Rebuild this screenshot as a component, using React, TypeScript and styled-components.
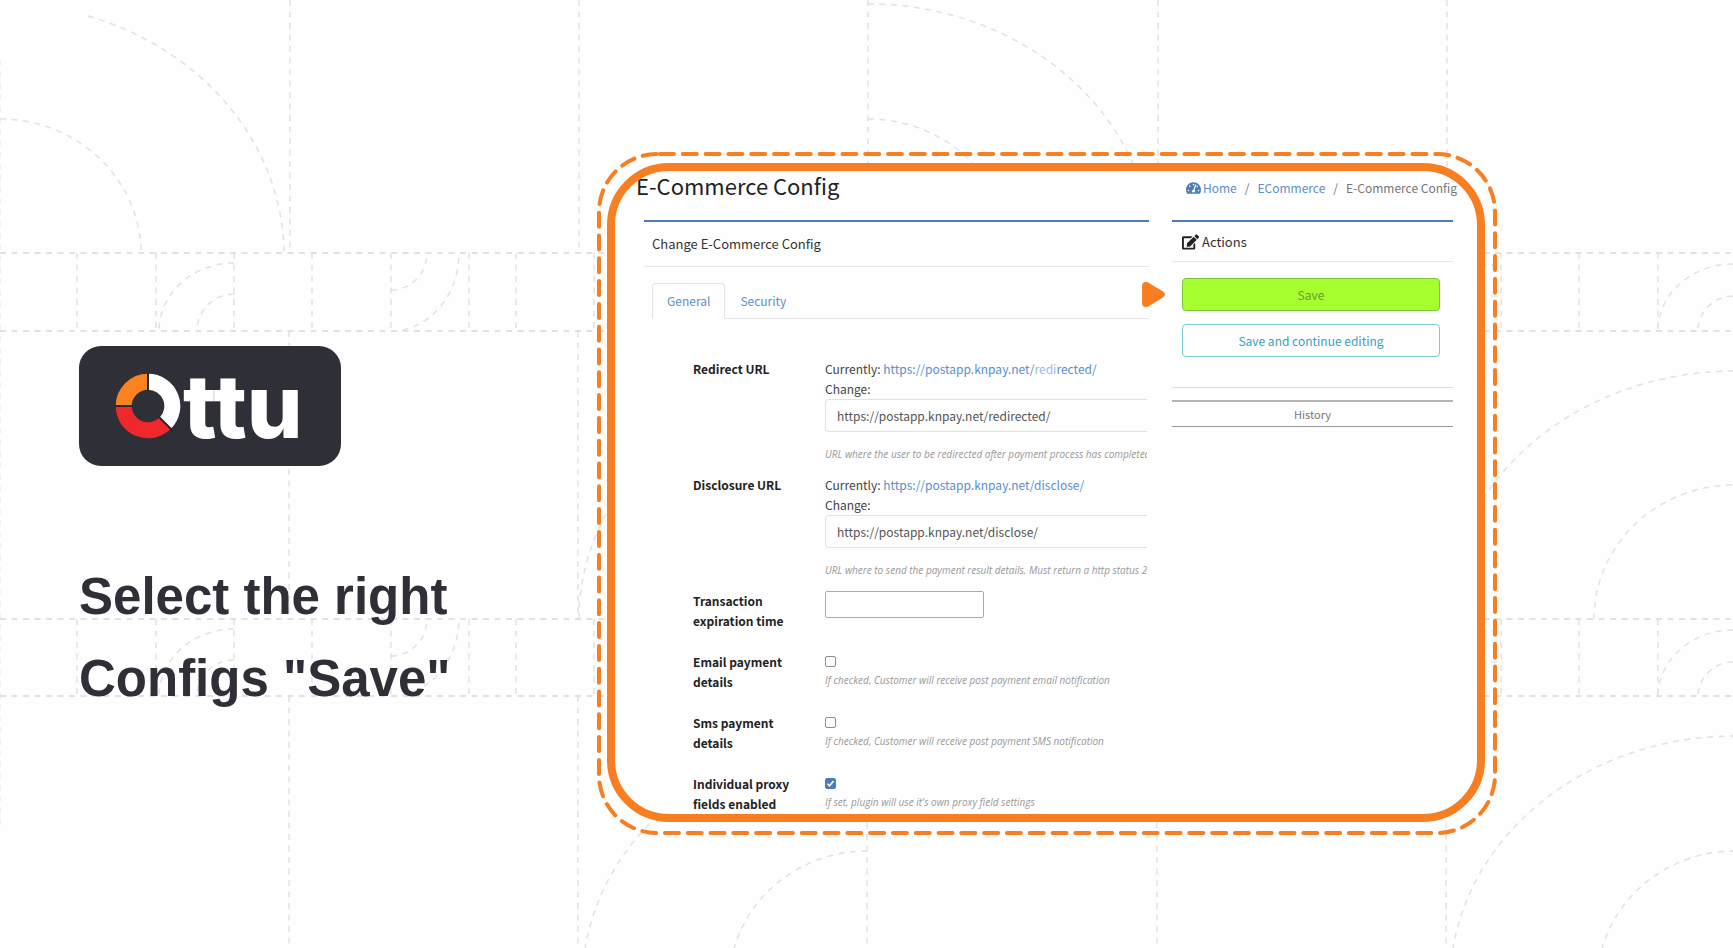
import React from "react";
import styled, { createGlobalStyle } from "styled-components";
import { FaEdit, FaTachometerAlt } from "react-icons/fa";

const ORANGE = "#f77e21";
const INK = "#2f2f37";
const BLUE = "#4a7ebb";
const LINK = "#5b8fcb";

const GlobalStyle = createGlobalStyle`
  *, *::before, *::after { box-sizing: border-box; }
  body {
    margin: 0;
    background: #fefefe;
    font-family: "Noto Sans CJK SC", "Noto Sans", sans-serif;
    font-size: 12px;
    line-height: 20px;
    color: #444;
  }
  button, input { font: inherit; color: inherit; }
  a { color: ${LINK}; text-decoration: none; }
`;

const Page = styled.main`
  position: relative;
  display: grid;
  grid-template-columns: 518px minmax(0, 1fr);
  min-height: 100vh;
  padding: 152px 236px 113px 79px;
  overflow: hidden;
`;

const Backdrop = styled.svg`
  position: absolute;
  inset: 0;
  width: 100%;
  height: 100%;
  fill: none;
  stroke: #e2e2e2;
  stroke-width: 1.5;
  stroke-dasharray: 6 5.5;
`;

const Intro = styled.section`
  position: relative;
  padding-top: 194px;
`;

const Logo = styled.div`
  display: flex;
  align-items: center;
  width: 262px;
  height: 120px;
  padding-left: 36px;
  border-radius: 22px;
  background: ${INK};
`;

const LogoRing = styled.svg`
  width: 66px;
  height: 66px;
  flex: none;
`;

const LogoText = styled.span`
  margin-left: 2px;
  font-family: Inter, sans-serif;
  font-weight: 800;
  font-size: 88px;
  line-height: 120px;
  color: #fff;
`;

const Headline = styled.h1`
  margin: 90px 0 0;
  font-family: "Liberation Sans", Arial, sans-serif;
  font-weight: 700;
  font-size: 51px;
  line-height: 82px;
  color: ${INK};
`;

const Showcase = styled.section`
  position: relative;
  padding: 11px 12px 13px 10px;
`;

const DashedOutline = styled.svg`
  position: absolute;
  inset: 0;
  width: 100%;
  height: 100%;
  overflow: visible;

  rect {
    width: calc(100% - 4px);
    height: calc(100% - 4px);
    fill: none;
    stroke: ${ORANGE};
    stroke-width: 4;
    stroke-linecap: round;
    stroke-dasharray: 14 8.8;
    stroke-dashoffset: -3;
  }
`;

const Frame = styled.div`
  position: relative;
  height: 100%;
  border: 8px solid ${ORANGE};
  border-radius: 62px;
  background: #fefefe;
  overflow: hidden;
`;

const TopBar = styled.header`
  display: flex;
  justify-content: space-between;
  align-items: flex-start;
  height: 36px;
  padding: 0 20px 0 21px;
`;

const PageTitle = styled.h2`
  margin: 0;
  font-weight: 400;
  font-size: 22px;
  line-height: 28px;
  color: #222;
`;

const Breadcrumb = styled.nav`
  display: flex;
  align-items: center;
  gap: 8px;
  line-height: 34px;
  color: #777;

  a { display: flex; align-items: center; gap: 2px; }
  svg { width: 15px; height: 14px; color: ${BLUE}; }
`;

const Columns = styled.div`
  display: grid;
  grid-template-columns: minmax(0, 1fr) 281px;
  column-gap: 23px;
  padding: 13px 24px 0 29px;
`;

const Card = styled.section`
  min-width: 0;
  border-top: 2px solid ${BLUE};
`;

const CardHeader = styled.h3<{ $height: number; $pad: number }>`
  display: flex;
  align-items: center;
  gap: 3px;
  height: ${(p) => p.$height}px;
  margin: 0;
  padding: 0 ${(p) => p.$pad}px;
  border-bottom: 1px solid #e6e6e6;
  font-weight: 400;
  font-size: 13px;
  color: #333;

  svg { width: 17px; height: 16px; color: #222; }
`;

const Tabs = styled.div`
  display: flex;
  margin: 16px 0 0 8px;
  border-bottom: 1px solid #e6e6e6;
`;

const Tab = styled.button<{ $active?: boolean }>`
  height: 36px;
  margin-bottom: -1px;
  padding: 0 14px;
  border: 1px solid ${(p) => (p.$active ? "#e2e2e2" : "transparent")};
  border-bottom-color: ${(p) => (p.$active ? "#fefefe" : "transparent")};
  border-radius: 4px 4px 0 0;
  background: none;
  color: ${LINK};
`;

const Form = styled.form`
  padding: 40px 2px 0 49px;
`;

const Row = styled.div<{ $tall?: boolean }>`
  display: grid;
  grid-template-columns: 112px minmax(0, 1fr);
  column-gap: 20px;
  padding-bottom: ${(p) => (p.$tall ? 11 : 21)}px;

  &:last-child { padding-bottom: 0; }
`;

const Label = styled.label`
  font-weight: 700;
  color: #222;
`;

/* Keeps the longer captions breaking after their second word. */
const LabelText = styled.span`
  display: block;
  max-width: 104px;
`;

const Field = styled.div`
  min-width: 0;
  overflow: hidden;
`;

const Line = styled.div`
  white-space: nowrap;
`;

const Faded = styled.span`
  opacity: 0.6;
`;

const UrlInput = styled.input`
  display: block;
  width: 100%;
  height: 33px;
  padding: 0 11px;
  border: 1px solid #dfe2e6;
  border-right: 0;
  border-radius: 4px 0 0 4px;
  background: transparent;
  color: #555;
`;

const TimeInput = styled.input`
  display: block;
  width: 159px;
  height: 27px;
  border: 1px solid #a9a9a9;
  border-radius: 2px;
  background: transparent;
`;

const Help = styled.p<{ $spaced?: boolean }>`
  margin: ${(p) => (p.$spaced ? 12 : 2)}px 0 0;
  font-family: "Open Sans", sans-serif;
  font-size: 10px;
  line-height: 20px;
  font-style: italic;
  white-space: nowrap;
  color: #999;
`;

const Check = styled.input`
  appearance: none;
  display: block;
  width: 11px;
  height: 11px;
  margin: 4px 0 3px;
  border: 1px solid #8a8a8a;
  border-radius: 2px;
  background: #fff;

  &:checked {
    border-color: ${BLUE};
    background: ${BLUE}
      url("data:image/svg+xml,%3Csvg xmlns='http://www.w3.org/2000/svg' viewBox='0 0 9 9' fill='none' stroke='white' stroke-width='1.5'%3E%3Cpath d='M1.5 4.8l2 2L7.5 2'/%3E%3C/svg%3E");
  }
`;

const Actions = styled.div`
  position: relative;
  display: grid;
  gap: 13px;
  padding: 16px 13px 30px 10px;
`;

const ActionButton = styled.button<{ $primary?: boolean }>`
  height: 33px;
  border: 1px solid ${(p) => (p.$primary ? "#7cc63c" : "#7ccbd8")};
  border-radius: 4px;
  background: ${(p) => (p.$primary ? "#a6ff2e" : "transparent")};
  color: ${(p) => (p.$primary ? "#6a9a35" : "#3a9fb8")};
`;

const Pointer = styled.svg`
  position: absolute;
  top: 20px;
  left: -30px;
  width: 23px;
  height: 25px;
  fill: ${ORANGE};
`;

const HistoryBlock = styled.div`
  padding-top: 12px;
  border-top: 1px solid #ddd;
`;

const HistoryLink = styled.a`
  display: block;
  border-top: 2px solid #b5b5b5;
  border-bottom: 1px solid #999;
  font-size: 11px;
  line-height: 24px;
  text-align: center;
  color: #777;
`;

const BAND_LINES = [77, 156, 234, 312, 391, 469, 516, 594, 1501, 1579, 1658];

function Band({ y, height }: { y: number; height: number }) {
  const end = y + height;
  return (
    <g>
      <path d={`M0 ${y}H1733M0 ${end}H1733`} stroke="#d9d9d9" />
      {BAND_LINES.map((x) => (
        <path key={x} d={`M${x} ${y}V${end}`} />
      ))}
      <path d={`M234 ${y + 10}A75 68 0 0 0 159 ${end}M234 ${y + 41}A37 37 0 0 0 197 ${end}`} />
      <path d={`M391 ${y + 37}A36 37 0 0 0 427 ${y}M391 ${end}A68 78 0 0 0 459 ${y}`} />
      <path d={`M1480 ${y + 12}H1501M1480 ${y + 43}H1501`} />
      <path d={`M1733 ${y + 11}A75 67 0 0 0 1658 ${end}M1733 ${y + 43}A35 35 0 0 0 1698 ${end}`} />
    </g>
  );
}

function Pattern() {
  return (
    <Backdrop viewBox="0 0 1733 948" preserveAspectRatio="none" aria-hidden="true">
      {[290, 579, 868, 1158, 1447].map((x) => (
        <path key={x} d={`M${x} 0V253M${x - 1} 331V619M${x - 1} 696V948`} />
      ))}
      <path d="M0 60V825" opacity="0.6" />
      <Band y={253} height={78} />
      <Band y={619} height={77} />
      <path d="M88 16A284 252 0 0 1 284 253M0 119A141 135 0 0 1 141 253" />
      <path d="M868 4A284 250 0 0 1 1152 253M868 119A141 134 0 0 1 1009 253" />
      <path d="M579 619A288 248 0 0 1 867 371" />
      <path d="M1447 619A288 248 0 0 1 1735 371M1594 619A140 134 0 0 1 1734 485" />
      <path d="M582 984A285 248 0 0 1 867 736M729 984A138 133 0 0 1 867 851" />
      <path d="M1450 984A285 248 0 0 1 1735 736M1597 984A138 133 0 0 1 1735 851" />
    </Backdrop>
  );
}

function UrlRow({ id, label, url, help }: { id: string; label: string; url: React.ReactNode; help: string }) {
  const value = `https://postapp.knpay.net/${id}/`;
  return (
    <Row $tall>
      <Label htmlFor={id}>{label}</Label>
      <Field>
        <Line>
          Currently: <a href={value}>{url}</a>
        </Line>
        <Line>Change:</Line>
        <UrlInput id={id} type="text" defaultValue={value} />
        <Help $spaced>{help}</Help>
      </Field>
    </Row>
  );
}

function CheckRow({ id, label, help, checked }: { id: string; label: string; help: string; checked?: boolean }) {
  return (
    <Row>
      <Label htmlFor={id}>
        <LabelText>{label}</LabelText>
      </Label>
      <Field>
        <Check id={id} type="checkbox" defaultChecked={checked} />
        <Help>{help}</Help>
      </Field>
    </Row>
  );
}

export default function App() {
  return (
    <Page>
      <GlobalStyle />
      <Pattern />
      <Intro>
        <Logo>
          <LogoRing viewBox="-33 -33 66 66" fill="none" strokeWidth="16" aria-hidden="true">
            <path d="M-24.3 0A24.3 24.3 0 0 1 0 -24.3" stroke="#fa831f" />
            <path d="M0 -24.3A24.3 24.3 0 0 1 17.2 17.2" stroke="#fff" />
            <path d="M17.2 17.2A24.3 24.3 0 0 1 -24.3 0" stroke="#f0272d" />
            <path d="M0 -33V-15M-33 0H-15M10 10L25 25" stroke="#202d38" strokeWidth="2" />
          </LogoRing>
          <LogoText>ttu</LogoText>
        </Logo>
        <Headline>
          Select the right
          <br />
          Configs "Save"
        </Headline>
      </Intro>
      <Showcase>
        <DashedOutline aria-hidden="true">
          <rect x="2" y="2" rx="58" />
        </DashedOutline>
        <Frame>
          <TopBar>
            <PageTitle>E-Commerce Config</PageTitle>
            <Breadcrumb aria-label="Breadcrumb">
              <a href="#home">
                <FaTachometerAlt />
                Home
              </a>
              <span>/</span>
              <a href="#ecommerce">ECommerce</a>
              <span>/</span>
              <span>E-Commerce Config</span>
            </Breadcrumb>
          </TopBar>
          <Columns>
            <Card>
              <CardHeader $height={45} $pad={8}>
                Change E-Commerce Config
              </CardHeader>
              <Tabs role="tablist">
                <Tab type="button" role="tab" aria-selected="true" $active>
                  General
                </Tab>
                <Tab type="button" role="tab" aria-selected="false">
                  Security
                </Tab>
              </Tabs>
              <Form>
                <UrlRow
                  id="redirected"
                  label="Redirect URL"
                  url={
                    <>
                      https://postapp.knpay.net/<Faded>redi</Faded>rected/
                    </>
                  }
                  help="URL where the user to be redirected after payment process has completed"
                />
                <UrlRow
                  id="disclose"
                  label="Disclosure URL"
                  url="https://postapp.knpay.net/disclose/"
                  help="URL where to send the payment result details. Must return a http status 2"
                />
                <Row>
                  <Label htmlFor="expiration">
                    <LabelText>Transaction expiration time</LabelText>
                  </Label>
                  <Field>
                    <TimeInput id="expiration" type="text" />
                  </Field>
                </Row>
                <CheckRow
                  id="email"
                  label="Email payment details"
                  help="If checked, Customer will receive post payment email notification"
                />
                <CheckRow
                  id="sms"
                  label="Sms payment details"
                  help="If checked, Customer will receive post payment SMS notification"
                />
                <CheckRow
                  id="proxy"
                  label="Individual proxy fields enabled"
                  help="If set, plugin will use it's own proxy field settings"
                  checked
                />
              </Form>
            </Card>
            <Card>
              <CardHeader $height={40} $pad={10}>
                <FaEdit />
                Actions
              </CardHeader>
              <Actions>
                <Pointer viewBox="0 0 23 25" aria-hidden="true">
                  <path d="M0 4Q0 0 4 0Q5.500 0 7 1L21 9.500Q23 11 23 12.500Q23 14 21 15.500L7 24Q5.500 25 4 25Q0 25 0 21Z" />
                </Pointer>
                <ActionButton type="button" $primary>
                  Save
                </ActionButton>
                <ActionButton type="button">Save and continue editing</ActionButton>
              </Actions>
              <HistoryBlock>
                <HistoryLink href="#history">History</HistoryLink>
              </HistoryBlock>
            </Card>
          </Columns>
        </Frame>
      </Showcase>
    </Page>
  );
}
